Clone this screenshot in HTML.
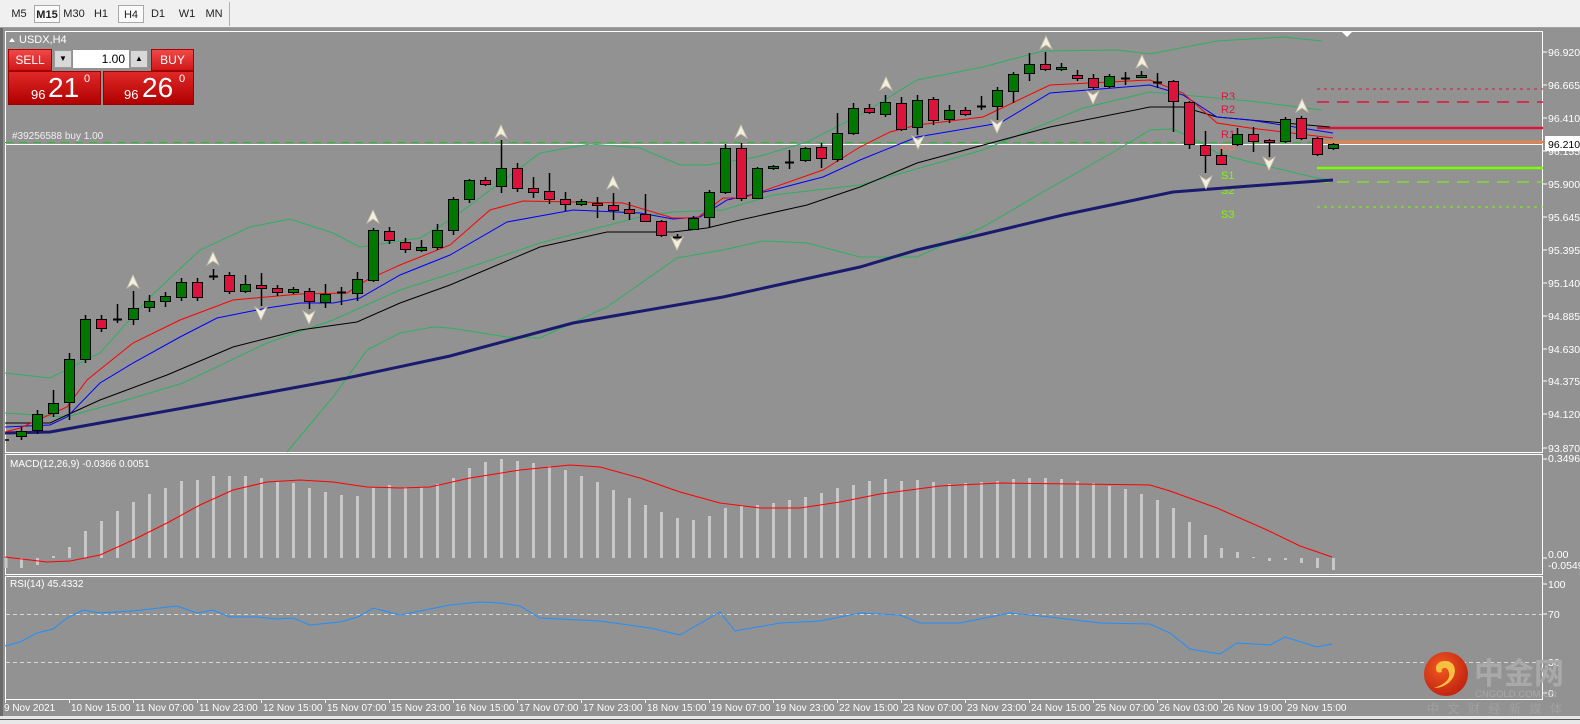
<!DOCTYPE html>
<html><head><meta charset="utf-8">
<style>
html,body{margin:0;padding:0;width:1580px;height:724px;overflow:hidden;background:#929292;font-family:"Liberation Sans",Tahoma,sans-serif}
#tb{position:absolute;left:0;top:0;width:1580px;height:27px;background:#f0f0f0;border-bottom:1px solid #a0a0a0}
.b{position:absolute;top:5px;height:18px;line-height:18px;font-size:11px;color:#222;text-align:center}
.sel{border:1px solid #a8a8a8;background:#fafafa;box-sizing:border-box}
svg{position:absolute;left:0;top:0}
.tp{position:absolute;font-family:"Liberation Sans",sans-serif;color:#fff}
</style></head><body>
<div id="tb">
<div class="b" style="left:8px;width:22px">M5</div>
<div class="b sel" style="left:34px;width:26px;font-weight:bold">M15</div>
<div class="b" style="left:63px;width:22px">M30</div>
<div class="b" style="left:91px;width:20px">H1</div>
<div class="b sel" style="left:118px;width:26px">H4</div>
<div class="b" style="left:148px;width:20px">D1</div>
<div class="b" style="left:177px;width:20px">W1</div>
<div class="b" style="left:203px;width:22px">MN</div>
<div style="position:absolute;left:229px;top:2px;width:1px;height:24px;background:#b0b0b0"></div>
</div>
<svg id="s" width="1580" height="724" xmlns="http://www.w3.org/2000/svg"></svg>
<!-- trade panel -->
<div style="position:absolute;left:8px;top:49px;width:44px;height:22px;background:linear-gradient(#f04848,#d01818);border:1px solid #a00;box-sizing:border-box;color:#fff;font-size:12px;text-align:center;line-height:20px">SELL</div>
<div style="position:absolute;left:54px;top:50px;width:18px;height:18px;background:#d8d8d8;border:1px solid #999;box-sizing:border-box;font-size:8px;text-align:center;line-height:16px">▼</div>
<div style="position:absolute;left:73px;top:50px;width:56px;height:18px;background:#fff;font-size:12px;text-align:right;line-height:18px;box-sizing:border-box;padding-right:4px">1.00</div>
<div style="position:absolute;left:130px;top:50px;width:18px;height:18px;background:#d8d8d8;border:1px solid #999;box-sizing:border-box;font-size:8px;text-align:center;line-height:16px">▲</div>
<div style="position:absolute;left:151px;top:49px;width:43px;height:22px;background:linear-gradient(#f04848,#d01818);border:1px solid #a00;box-sizing:border-box;color:#fff;font-size:12px;text-align:center;line-height:20px">BUY</div>
<div style="position:absolute;left:8px;top:71px;width:93px;height:34px;background:linear-gradient(#e02828,#b00000);border:1px solid #900;box-sizing:border-box"></div>
<div style="position:absolute;left:103px;top:71px;width:91px;height:34px;background:linear-gradient(#e02828,#b00000);border:1px solid #900;box-sizing:border-box"></div>
<div class="tp" style="left:31px;top:87px;font-size:13px">96</div>
<div class="tp" style="left:48px;top:72px;font-size:28px">21</div>
<div class="tp" style="left:84px;top:73px;font-size:11px">0</div>
<div class="tp" style="left:124px;top:87px;font-size:13px">96</div>
<div class="tp" style="left:142px;top:72px;font-size:28px">26</div>
<div class="tp" style="left:179px;top:73px;font-size:11px">0</div>
<script>
var S=document.getElementById('s'),h='';
function L(x1,y1,x2,y2,c,w,d){h+='<line x1="'+x1+'" y1="'+y1+'" x2="'+x2+'" y2="'+y2+'" stroke="'+c+'" stroke-width="'+(w||1)+'"'+(d?' stroke-dasharray="'+d+'"':'')+'/>';}
function P(pts,c,w){h+='<polyline fill="none" stroke="'+c+'" stroke-width="'+(w||1)+'" points="'+pts.map(function(p){return p.join(',')}).join(' ')+'"/>';}
function T(x,y,t,c,s,a){h+='<text x="'+x+'" y="'+y+'" fill="'+(c||'#fff')+'" font-size="'+(s||10)+'" font-family="Liberation Sans,Tahoma,sans-serif"'+(a?' text-anchor="'+a+'"':'')+'>'+t+'</text>';}
// window frame
h+='<rect x="0" y="28" width="3" height="696" fill="#6a6a6a"/>';
h+='<rect x="0" y="716" width="1580" height="8" fill="#e8e8e8"/>';
L(0,719.5,1580,719.5,'#555',1);
// pane borders
h+='<rect x="5.5" y="31.5" width="1537" height="421" fill="none" stroke="#fff"/>';
h+='<rect x="5.5" y="454.5" width="1537" height="120" fill="none" stroke="#fff"/>';
h+='<rect x="5.5" y="576.5" width="1537" height="123" fill="none" stroke="#fff"/>';
// top marker
h+='<path d="M1342,32 L1352,32 L1347,37 Z" fill="#fff"/>';
// labels
h+='<path d="M9,42 L12,38 L15,42 Z" fill="#fff"/>';
T(19,43,'USDX,H4','#fff',11);
T(12,139,'#39256588 buy 1.00','#f0f0f0',10);
// price axis
var pl=[[52,'96.920'],[85,'96.665'],[118,'96.410'],[151,'96.155'],[184,'95.900'],[217,'95.645'],[250,'95.395'],[283,'95.140'],[316,'94.885'],[349,'94.630'],[381,'94.375'],[414,'94.120'],[448,'93.870']];
pl.forEach(function(p){L(1543,p[0],1547,p[0],'#fff');T(1548,p[0]+4,p[1],'#fff',10.5);});
// pivot lines
L(1317,89,1543,89,'#dc143c',1,'3,4');
L(1317,102,1543,102,'#dc143c',1.5,'12,8');
L(1317,128,1543,128,'#dc143c',2.5);
L(5,142.5,1543,142.5,'#22c022',1,'8,6');
L(5,144.5,1543,144.5,'#fff',1);
L(1317,142,1543,142,'#f08040',2.5);
L(1317,168,1543,168,'#7cfc00',2.5);
L(1317,182,1543,182,'#7cfc00',1,'12,8');
L(1317,207,1543,207,'#7cfc00',1,'3,4');
h+='<rect x="1545" y="136" width="35" height="15" fill="#fff"/>';
T(1548,148,'96.210','#000',10.5);
T(1221,100,'R3','#dc143c',11);T(1221,113,'R2','#dc143c',11);T(1221,138,'R1','#dc143c',11);T(1221,153,'PP','#f08060',11);
T(1221,179,'S1','#7cfc00',11);T(1221,194,'S2','#7cfc00',11);T(1221,218,'S3','#7cfc00',11);
// bollinger
P([[5,373],[50,378],[100,353],[150,297],[200,250],[250,227],[290,219],[333,233],[360,247],[420,238],[450,220],[540,153],[590,144],[640,148],[680,165],[707,165],[757,157],[807,142],[860,115],[917,80],[983,67],[1043,51],[1117,50],[1150,54],[1217,41],[1283,37],[1322,41]],'#2eb060');
P([[5,413],[67,417],[133,398],[183,383],[267,343],[333,320],[400,290],[450,274],[540,243],[640,217],[673,212],[723,210],[773,195],[860,185],[983,150],[1083,108],[1150,92],[1250,101],[1322,110]],'#2eb060');
P([[287,452],[333,397],[367,350],[400,333],[433,327],[450,328],[507,337],[540,338],[607,307],[677,258],[723,250],[763,241],[807,243],[860,257],[917,257],[983,227],[1043,192],[1117,150],[1150,130],[1173,129],[1200,142],[1217,153],[1250,162],[1317,178],[1333,180]],'#2eb060');
// MAs
P([[5,433],[50,432],[200,405],[347,378],[450,356],[573,323],[723,297],[860,267],[917,250],[1063,215],[1173,192],[1250,186],[1333,180]],'#1a1a6e',3);
P([[5,423],[50,423],[67,415],[100,400],[167,375],[233,347],[300,330],[357,322],[400,303],[450,285],[540,247],[607,232],[673,232],[707,228],[740,220],[807,205],[860,187],[917,163],[1050,127],[1150,107],[1183,107],[1217,117],[1250,120],[1330,127]],'#000');
P([[5,427],[50,425],[67,417],[100,383],[133,363],[180,337],[217,318],[267,308],[300,303],[333,303],[360,298],[400,275],[450,255],[507,222],[573,210],[640,213],[673,219],[700,217],[727,200],[773,190],[823,177],[860,160],[917,137],[1000,123],[1050,93],[1150,85],[1183,95],[1217,117],[1250,120],[1333,133]],'#0000ff');
P([[5,432],[20,428],[67,407],[87,380],[133,343],[180,320],[233,300],[300,294],[347,293],[367,280],[400,265],[450,245],[490,210],[523,201],[623,203],[673,218],[697,218],[723,198],[743,198],[823,170],[860,147],[890,132],[917,125],[983,117],[1050,85],[1150,80],[1183,93],[1217,123],[1250,128],[1333,138]],'#ff0000');
// candles [o(top/bottom), c, color g/r, wickTop, wickBot]
var C=[[431,436,'g'],[414,430,'g'],[403,413,'g',390,417],[359,402,'g',353,420],[319,359,'g'],[319,328,'r'],[319,319,'d',304,323],[308,319,'g',291,325],[301,307,'g',295,312],[296,301,'g',292,307],[282,297,'g'],[282,297,'r'],[276,276,'d',269,280],[275,291,'r',272,294],[284,291,'g',275,293],[285,288,'r',273,306],[288,292,'r',285,296],[289,292,'g',287,294],[291,301,'r',288,309],[294,302,'g',284,308],[292,294,'d',287,305],[279,293,'g',272,301],[230,280,'g',228,282],[231,240,'r'],[242,249,'r',238,253],[247,250,'g',240,252],[230,247,'g',224,250],[199,230,'g',197,235],[180,199,'g',179,203],[180,184,'r',177,186],[168,186,'g',140,193],[168,188,'r',163,192],[188,192,'r',177,198],[191,199,'r',173,204],[199,204,'r',192,211],[201,204,'g',199,206],[203,205,'r',197,218],[205,210,'r',193,220],[209,213,'r',202,220],[214,221,'r',194,218],[221,235,'r',220,237],[237,237,'d',234,238],[218,229,'g',216,230],[192,217,'g',190,228],[148,192,'g',144,194],[148,198,'r',143,201],[168,198,'g',167,199],[166,168,'g',165,170],[162,162,'d',150,169],[148,160,'g',147,162],[147,158,'r',143,168],[133,159,'g',113,162],[108,133,'g',103,135],[108,112,'r',104,114],[102,114,'g',95,117],[103,129,'r',97,131],[100,127,'g',95,135],[99,120,'r',97,125],[110,119,'g',105,123],[110,114,'r',107,116],[106,106,'d',96,110],[90,106,'g',87,120],[74,91,'g',72,103],[64,73,'g',53,81],[64,69,'r',52,71],[67,69,'g',63,71],[75,78,'r',70,81],[78,87,'r',74,90],[76,86,'g',74,88],[78,78,'d',72,85],[75,77,'g',71,78],[82,82,'d',73,88],[81,101,'r',80,132],[102,144,'r',101,149],[145,155,'r',131,173],[155,164,'r',149,165],[134,144,'g',128,146],[134,141,'r',127,152],[140,142,'r',139,157],[119,141,'g',117,143],[118,138,'r',116,140],[138,154,'r',137,156],[144,148,'g',143,150]];
L(5,440,9,440,'#000',1.5);
C.forEach(function(c,i){var x=21+16*i;var t=Math.min(c[0],c[1]),b=Math.max(c[0],c[1]);var wt=c[3]||t-4,wb=c[4]||b+4;
L(x+0.5,wt,x+0.5,wb,'#000',1.5);
if(c[2]=='d'){L(x-4,t+0.5,x+5,t+0.5,'#000',2);}
else{var f=c[2]=='g'?'#007800':'#dc143c';h+='<rect x="'+(x-4.5)+'" y="'+(t+0.5)+'" width="10" height="'+Math.max(b-t,2)+'" fill="'+f+'" stroke="#000" stroke-width="1"/>';}
});
// fractal arrows
function AU(x,y){h+='<path d="M'+x+','+(y-7)+' L'+(x+6)+','+(y+6)+' L'+x+','+(y+2)+' L'+(x-6)+','+(y+6)+' Z" fill="#f4f0e0" stroke="#c8c0a8" stroke-width="0.8"/>';}
function AD(x,y){h+='<path d="M'+x+','+(y+7)+' L'+(x+6)+','+(y-6)+' L'+x+','+(y-2)+' L'+(x-6)+','+(y-6)+' Z" fill="#f4f0e0" stroke="#c8c0a8" stroke-width="0.8"/>';}
[[133,282],[213,259],[373,217],[501,132],[613,183],[741,132],[886,84],[1046,43],[1142,62],[1302,106]].forEach(function(a){AU(a[0],a[1]);});
[[261,313],[309,317],[677,243],[918,142],[997,126],[1093,97],[1206,182],[1269,163]].forEach(function(a){AD(a[0],a[1]);});
// MACD
T(10,467,'MACD(12,26,9) -0.0366 0.0051','#fff',10);
T(1548,462,'0.3496','#fff',10.5);T(1548,558,'0.00','#fff',10.5);T(1548,569,'-0.0549','#fff',10.5);
L(1543,459,1547,459,'#fff');L(1543,558,1547,558,'#fff');
var M=[568,565,556,547,531,521,511,502,494,488,481,480,476,476,476,478,482,483,488,492,495,496,488,485,487,487,484,478,468,462,459,461,463,466,470,476,482,490,498,505,512,518,520,516,508,505,505,503,500,497,493,488,485,481,479,481,480,482,484,483,482,481,479,478,478,479,481,483,486,489,494,500,508,522,535,548,552,557,561,560,563,568,570];
h+='<rect x="4.5" y="558" width="3" height="10" fill="#c8c8c8"/>';
M.forEach(function(v,i){var x=21+16*i-1;var t=Math.min(v,558),b=Math.max(v,558);h+='<rect x="'+x+'" y="'+t+'" width="3" height="'+Math.max(b-t,1)+'" fill="#c8c8c8"/>';});
P([[5,557],[47,562],[70,561],[100,555],[133,540],[167,523],[200,505],[233,490],[267,482],[300,480],[333,482],[367,487],[400,488],[430,487],[470,478],[520,470],[570,465],[600,467],[640,478],[680,492],[720,503],[760,508],[800,508],[840,502],[880,494],[940,486],[1000,483],[1150,485],[1170,491],[1217,508],[1267,530],[1300,546],[1332,557]],'#ff0000');
// RSI
T(10,587,'RSI(14) 45.4332','#fff',10);
L(6,614.5,1542,614.5,'#d8d8d8',1,'4,3');L(6,662.5,1542,662.5,'#d8d8d8',1,'4,3');
[[584,'100'],[614,'70'],[662,'30'],[693,'0']].forEach(function(p){L(1543,p[0],1547,p[0],'#fff');T(1548,p[0]+4,p[1],'#fff',10.5);});
P([[5,646],[20,642],[37,633],[53,629],[67,618],[83,610],[100,613],[133,611],[150,609],[177,606],[197,613],[213,610],[230,617],[257,617],[277,619],[293,618],[310,625],[340,622],[358,617],[373,608],[400,615],[450,605],[480,602],[500,603],[520,606],[540,618],[600,621],[650,628],[680,635],[720,612],[735,631],[780,623],[820,621],[860,613],[900,615],[920,623],[960,623],[1010,613],[1050,617],[1100,623],[1150,624],[1170,633],[1190,649],[1220,654],[1237,643],[1270,645],[1285,637],[1317,647],[1332,644]],'#1e90ff');
// dates
var D=['9 Nov 2021','10 Nov 15:00','11 Nov 07:00','11 Nov 23:00','12 Nov 15:00','15 Nov 07:00','15 Nov 23:00','16 Nov 15:00','17 Nov 07:00','17 Nov 23:00','18 Nov 15:00','19 Nov 07:00','19 Nov 23:00','22 Nov 15:00','23 Nov 07:00','23 Nov 23:00','24 Nov 15:00','25 Nov 07:00','26 Nov 03:00','26 Nov 19:00','29 Nov 15:00'];
D.forEach(function(d,i){var x=5+64*i;L(x+0.5,699,x+0.5,703,'#fff');T(x+(i?2:-1),711,d,'#fff',10);});
// watermark
h+='<defs><radialGradient id="lg" cx="0.4" cy="0.35" r="0.7"><stop offset="0" stop-color="#f05a20"/><stop offset="1" stop-color="#c02010"/></radialGradient></defs>';
h+='<circle cx="1446" cy="674" r="22" fill="url(#lg)"/>';
h+='<path d="M1436,668 C1436,660 1450,658 1454,666 C1458,676 1448,688 1434,688 C1446,684 1452,678 1448,670 C1446,666 1440,668 1442,672 C1436,674 1436,670 1436,668 Z" fill="#f8c040"/>';
T(1474,684,'中金网','#a9a9a9',30);
h=h.replace('font-family="Liberation Sans,Tahoma,sans-serif">中金网','font-family="Liberation Sans,Noto Sans CJK SC,sans-serif" font-weight="bold">中金网');
T(1475,697,'CNGOLD.COM.CN','#a9a9a9',9.5);
h+='<text x="1427" y="713" fill="#a0a0a0" font-size="12" letter-spacing="8.5" font-family="Liberation Sans,Noto Sans CJK SC,sans-serif">中文财经新媒体</text>';
S.innerHTML=h;
</script>
</body></html>
